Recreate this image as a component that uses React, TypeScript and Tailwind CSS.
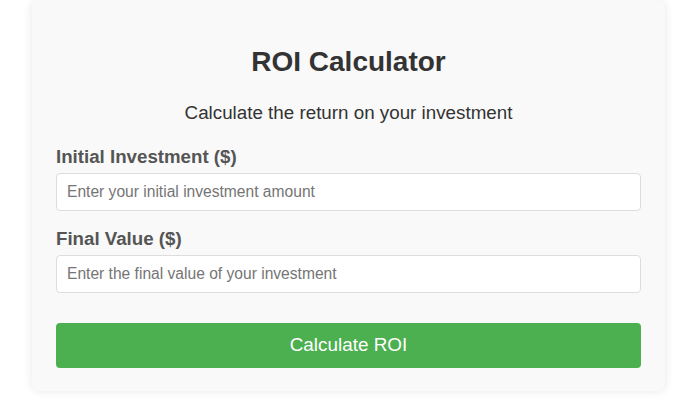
import { useState } from "react"

export default function App() {

const [initial, setInitial] = useState("")
const [finalValue, setFinalValue] = useState("")

return (

<div className="min-h-screen bg-white font-['Liberation_Sans',Arial,sans-serif]">

<div className="ml-[32px] w-[633px] rounded-lg bg-[#f9f9f9] px-6 pt-[46px] pb-[23px] shadow-[0_0_10px_rgba(0,0,0,0.1)]">

<h1 className="text-center text-[28px] leading-8 font-bold text-[#333]">
ROI Calculator
</h1>

<p className="mt-[24px] text-center text-[18.8px] leading-[21px] text-[#333]">
Calculate the return on your investment
</p>

<label className="mt-[23px] block text-[18.7px] leading-[22px] font-bold text-[#555]">
Initial Investment ($)
</label>

<input
type="number"
placeholder="Enter your initial investment amount"
value={initial}
onChange={(e)=>setInitial(e.target.value)}
className="mt-[5px] block h-[38px] w-full rounded border border-[#ddd] bg-white px-[10px] text-[15.6px] text-[#333] placeholder:text-[#757575] outline-none"
/>

<label className="mt-[17px] block text-[18.7px] leading-[22px] font-bold text-[#555]">
Final Value ($)
</label>

<input
type="number"
placeholder="Enter the final value of your investment"
value={finalValue}
onChange={(e)=>setFinalValue(e.target.value)}
className="mt-[5px] block h-[38px] w-full rounded border border-[#ddd] bg-white px-[10px] text-[15.6px] text-[#333] placeholder:text-[#757575] outline-none"
/>

<button
type="button"
className="mt-[30px] block h-[45px] w-full rounded bg-[#4caf50] text-[18.9px] text-white"
>
Calculate ROI
</button>

</div>

</div>

)

}
